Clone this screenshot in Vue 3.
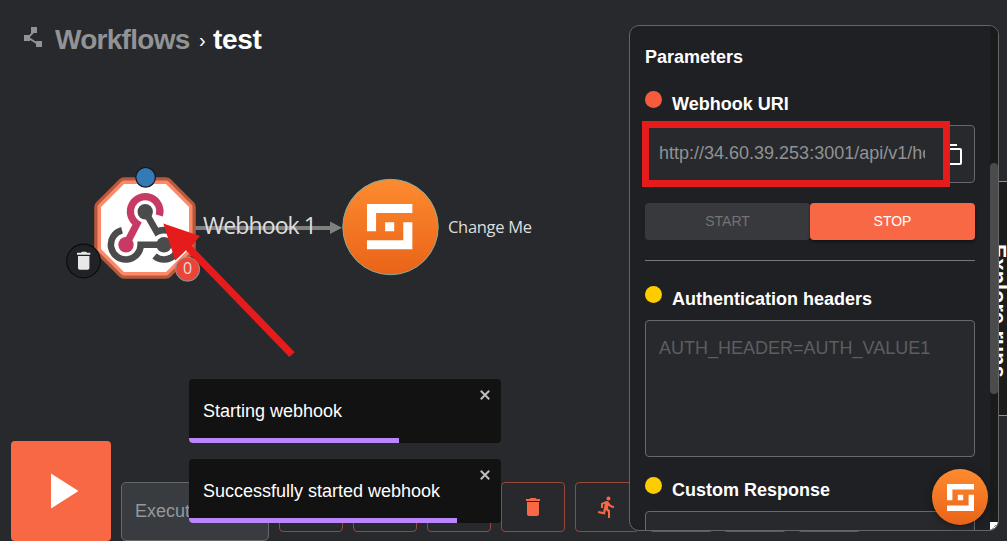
<script setup>
const nodeLogo = 'M0 0H5V1H1V3H0ZM4 2H5V5H0V4H4ZM2 2H3V3H2Z'
const toasts = [
  { text: 'Starting webhook', width: 210 },
  { text: 'Successfully started webhook', width: 268 },
]
</script>

<template>
  <div class="page">
    <svg class="graph" width="1007" height="541" viewBox="0 0 1007 541">
      <defs>
        <linearGradient id="orange" x1="0" y1="0" x2="0" y2="1">
          <stop offset="0" stop-color="#fd8b30" />
          <stop offset="1" stop-color="#e96318" />
        </linearGradient>
      </defs>
      <path d="M194 228H332" stroke="#808080" stroke-width="4" />
      <path d="M330 221.5L342 227.7L330 234Z" fill="#808080" />

      <g stroke-linejoin="round">
        <path d="M124 184H166L189 207V249L166 272H124L101 249V207Z" fill="#b7583c" stroke="#b7583c" stroke-width="13.5" />
        <path d="M124 184H166L189 207V249L166 272H124L101 249V207Z" fill="#fc8a69" stroke="#fc8a69" stroke-width="7" />
        <path d="M124 184H166L189 207V249L166 272H124L101 249V207Z" fill="#fff" />
      </g>
      <g fill="none" stroke-width="7.2">
        <path d="M145.2 211.7L156.8 232A14.7 14.7 0 1 1 154.5 256" stroke="#4b4b4b" stroke-width="6.6" />
        <path d="M122 230.2A14.9 14.9 0 1 0 140.7 244.7H164" stroke="#4b4b4b" stroke-width="6.6" />
        <path d="M159.4 215.5A14.8 14.8 0 1 0 137 223.8L126 244.7" stroke="#c73a63" />
      </g>
      <circle cx="145.2" cy="211.7" r="7.7" fill="#4b4b4b" />
      <circle cx="164" cy="244.7" r="7.7" fill="#4b4b4b" />
      <circle cx="126" cy="244.7" r="7.7" fill="#c73a63" />

      <circle cx="145.6" cy="177.3" r="9.8" fill="#337ab7" stroke="#101317" stroke-width="1.2" />
      <circle cx="83.5" cy="261" r="16.8" fill="#212225" stroke="#0b0c0e" stroke-width="1.2" />
      <path d="M77 252.8H81L82 251.8H86L87 252.8H90.3V254.8H77ZM78 256H89.4V268Q89.4 269.7 87.7 269.7H79.7Q78 269.7 78 268Z" fill="#e8e8e8" />
      <circle cx="187.6" cy="269.2" r="12" fill="#ec4536" stroke="#7f9ea2" />
      <text x="187.7" y="274.4" class="label" font-size="16" text-anchor="middle">0</text>

      <circle cx="390.5" cy="227" r="47.7" fill="url(#orange)" stroke="#7fae9f" />
      <path :d="nodeLogo" fill="#fff" transform="translate(367 204) scale(9.07)" />
      <text x="203" y="234" class="label" font-size="23" textLength="114">Webhook 1</text>
      <text x="448" y="232.5" class="label" font-size="16.5" textLength="84">Change Me</text>
      <path d="M163.3 223.6L200 236L191.8 245.8L294.7 352.2L289.3 357L186 250.3L175.3 260.6Z" fill="#e61b1b" />
    </svg>

    <header class="crumbs">
      <svg width="20" height="21" viewBox="0 0 20 21" fill="#929395">
        <path d="M10 4.500L4 10.500L14 17" fill="none" stroke="#929395" stroke-width="1.8" />
        <path d="M7 0H13V6H7ZM0 8H6V14H0ZM12 14H18V20H12Z" />
      </svg>
      <span class="parent">Workflows</span>
      <span class="sep">›</span>
      <span class="current">test</span>
    </header>

    <footer class="toolbar">
      <button class="play"><svg width="100" height="100"><path d="M40 32.500V67.500L67.500 50Z" fill="#fff" /></svg></button>
      <div class="argument">Execution</div>
      <button v-for="n in 8" :key="n" class="tool">
        <svg v-if="n === 4" width="24" height="24" viewBox="0 0 24 24" fill="#f96845"><path d="M6 19c0 1.1.9 2 2 2h8c1.1 0 2-.9 2-2V7H6v12zM19 4h-3.500l-1-1h-5l-1 1H5v2h14V4z" /></svg>
        <svg v-if="n === 5" width="24" height="24" viewBox="0 0 24 24" fill="#f96845"><path d="M13.490 5.480c1.1 0 2-.9 2-2s-.9-2-2-2-2 .9-2 2 .9 2 2 2zm-3.600 13.900l1-4.400 2.100 2v6h2v-7.500l-2.100-2 .6-3c1.300 1.500 3.300 2.500 5.500 2.500v-2c-1.900 0-3.500-1-4.300-2.400l-1-1.600c-.4-.6-1-1-1.700-1-.3 0-.5.1-.8.1l-5.200 2.200v4.700h2v-3.400l1.800-.7-1.600 8.100-4.900-1-.4 2 7 1.400z" /></svg>
      </button>
    </footer>

    <div class="toasts">
      <div v-for="t in toasts" :key="t.text" class="toast">
        <span>{{ t.text }}</span>
        <svg class="close" width="10" height="10"><path d="M.8.8L9.2 9.2M9.2.8L.8 9.2" stroke="#bcbcbc" stroke-width="2" /></svg>
        <i :style="{ width: t.width + 'px' }"></i>
      </div>
    </div>

    <aside class="runs"><span>Explore runs</span></aside>

    <section class="panel">
      <div class="body">
        <h3 class="title">Parameters</h3>
        <div class="head first"><i class="dot red"></i><b>Webhook URI</b></div>
        <div class="field uri">
          <span class="value">http://34.60.39.253:3001/api/v1/hooks</span>
          <svg width="24" height="24" viewBox="0 0 24 24" fill="none" stroke="#fff" stroke-width="2"><path d="M4 3H15M6 7H18Q19 7 19 8V21Q19 22 18 22H6Z" /></svg>
        </div>
        <div class="actions"><button class="start">START</button><button class="stop">STOP</button></div>
        <div class="rule"></div>
        <div class="head auth"><i class="dot"></i><b>Authentication headers</b></div>
        <div class="field area">AUTH_HEADER=AUTH_VALUE1</div>
        <div class="head custom"><i class="dot"></i><b>Custom Response</b></div>
        <div class="field area"></div>
      </div>
      <div class="track">
        <div class="thumb"></div>
        <svg class="grip" width="8" height="8"><rect width="8" height="8" fill="#fff" /><path d="M2.500 6.500L6.500 2.500M5 6.500L6.500 5" stroke="#555" stroke-dasharray="1 1" /></svg>
      </div>
    </section>

    <div class="highlight"></div>
    <button class="chat"><svg width="27" height="27" viewBox="0 0 5 5" fill="#fff"><path :d="nodeLogo" /></svg></button>
  </div>
</template>

<style>
body { background: #27292d; overflow: hidden; }
</style>

<style scoped>
* { box-sizing: border-box; }
.page { position: relative; width: 1007px; height: 541px; overflow: hidden; background: #27292d; color: #fff; font: 18px/22px "Liberation Sans", Arial, sans-serif; }
button { border: 0; padding: 0; font: inherit; color: inherit; }
.graph { position: absolute; inset: 0; }
.label { font-family: "Open Sans", "Noto Sans", sans-serif; fill: #dedede; }
.crumbs { position: relative; display: flex; align-items: center; padding: 25px 0 0 24px; height: 55px; font-size: 28px; font-weight: bold; white-space: nowrap; }
.crumbs svg { margin: -5px 11px 0 0; }
.parent { color: #929395; width: 137px; letter-spacing: -.72px; }
.sep { font-size: 20px; font-weight: normal; width: 21px; padding-left: 7px; }
.current { letter-spacing: -.3px; }
.toolbar { position: absolute; left: 11px; top: 441px; display: flex; align-items: flex-start; gap: 10px; }
.play { width: 100px; height: 100px; flex: none; background: #f96845; border-radius: 4px; }
.play svg { display: block; }
.argument { width: 148px; height: 59px; flex: none; margin-top: 41px; padding: 17px 13px; border: 1px solid #67696c; border-radius: 5px; background: #383b40; color: #96989b; }
.tool { width: 64px; height: 50px; flex: none; margin-top: 41px; border: 1px solid #95493a; border-radius: 4px; background: transparent; display: flex; align-items: center; justify-content: center; }
.toasts { position: absolute; left: 189px; top: 379px; display: flex; flex-direction: column; gap: 16px; }
.toast { position: relative; width: 312px; height: 64px; padding: 21px 14px; border-radius: 4px; overflow: hidden; background: #121212; }
.toast i { position: absolute; left: 0; bottom: 0; height: 5px; background: #bb86fc; }
.close { position: absolute; right: 11px; top: 11px; }
.runs { position: absolute; left: 980px; top: 181px; width: 60px; height: 235px; border: 1px solid #f96845; background: #1c1c1c; }
.runs span { display: block; writing-mode: vertical-rl; font-size: 21.500px; letter-spacing: .2px; font-weight: bold; line-height: 24px; margin: 62px 0 0 5px; }
.panel { position: absolute; left: 629px; top: 25px; width: 370px; height: 506px; display: flex; border: 1px solid #636569; border-radius: 10px; background: #1f2023; overflow: hidden; }
.body { width: 360px; padding: 20px 15px 0; height: 504px; overflow: hidden; flex: none; }
.title { margin: 0; font-size: 18px; line-height: 22px; }
.head { display: flex; align-items: flex-start; height: 34px; }
.head b { padding-top: 2px; }
.first { margin-top: 23px; }
.dot { width: 17px; height: 17px; margin-right: 10px; border-radius: 50%; background: #ffcc00; }
.red { background: #f85a3e; }
.field { width: 330px; border: 1px solid #67696c; border-radius: 4px; background: #27292d; }
.uri { height: 58px; display: flex; align-items: center; padding-left: 13px; color: #919294; }
.value { width: 266px; overflow: hidden; white-space: nowrap; padding-bottom: 2px; }
.uri svg { margin-left: 17px; }
.actions { display: flex; margin-top: 20px; }
.actions button { width: 165px; height: 37px; border-radius: 4px; font-size: 14px; padding-bottom: 1px; }
.start { background: #38393c; color: #737476; }
.stop { background: #f96845; box-shadow: 0 2px 3px rgba(0, 0, 0, .4); }
.rule { height: 1px; margin-top: 20px; background: #76777a; }
.auth { margin-top: 25px; }
.area { height: 137px; padding: 16px 13px; color: #5c5e60; }
.custom { margin-top: 20px; }
.track { position: relative; width: 8px; background: #1b1b1b; }
.thumb { height: 231px; margin-top: 137px; border-radius: 4px; background: #4b4b4b; }
.grip { position: absolute; bottom: 0; left: 0; }
.highlight { position: absolute; left: 642px; top: 121px; width: 308px; height: 66px; border: 7px solid #e61b1b; }
.chat { position: absolute; left: 932px; top: 469px; width: 56px; height: 56px; border-radius: 50%; display: flex; align-items: center; justify-content: center; background: linear-gradient(#fd8b30, #e96318); box-shadow: 0 2px 8px rgba(0, 0, 0, .35); }
</style>
